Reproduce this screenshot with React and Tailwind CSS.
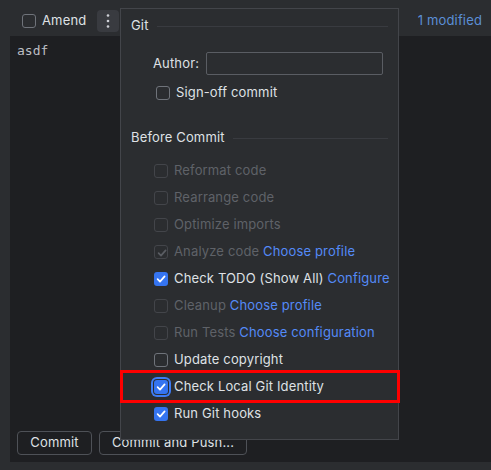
const Check = ({ color = "#ffffff" }) => (
    <svg width="14" height="14" viewBox="0 0 14 14" className="absolute inset-0">
        <path d="M3.6 7.2 L6 9.6 L10.6 4.4" fill="none" stroke={color} strokeWidth="1.7" strokeLinecap="round" strokeLinejoin="round" />
    </svg>
)

const Box = ({ checked, disabled, focused }) => {
    if (checked && !disabled) {
        return (
            <span
                className={
                    "relative w-[14px] h-[14px] rounded-[3px] bg-[#3574f0] shrink-0 " +
                    (focused ? "ring-2 ring-[#3d7cf5] ring-offset-1 ring-offset-[#2b2d30]" : "")
                }
            >
                <Check />
            </span>
        )
    }
    return (
        <span
            className={
                "relative w-[14px] h-[14px] rounded-[3px] border shrink-0 " +
                (disabled ? "border-[#43454a]" : "border-[#6f737a]")
            }
        >
            {checked && <Check color="#5a5d63" />}
        </span>
    )
}

const Row = ({ label, link, checked, disabled, focused }) => (
    <div className="h-[27px] flex items-center gap-[6px] pl-[33px]">
        <Box checked={checked} disabled={disabled} focused={focused} />
        <span className={disabled ? "text-[#5f6268]" : "text-[#dfe1e5]"}>
            {label}
            {link && <span className="text-[#548af7]"> {link}</span>}
        </span>
    </div>
)

const Section = ({ title }) => (
    <div className="h-[30px] pt-[4px] flex items-center gap-[8px] pl-[10px] pr-[10px]">
        <span className="text-[#dfe1e5]">{title}</span>
        <div className="flex-1 h-px bg-[#393b40]" />
    </div>
)

const App = () => {
    const rows = [
        { label: "Reformat code", disabled: true },
        { label: "Rearrange code", disabled: true },
        { label: "Optimize imports", disabled: true },
        { label: "Analyze code", link: "Choose profile", disabled: true, checked: true },
        { label: "Check TODO (Show All)", link: "Configure", checked: true },
        { label: "Cleanup", link: "Choose profile", disabled: true },
        { label: "Run Tests", link: "Choose configuration", disabled: true },
        { label: "Update copyright" },
        { label: "Check Local Git Identity", checked: true, focused: true },
        { label: "Run Git hooks", checked: true },
    ]

    return (
        <div
            className="relative w-[491px] h-[470px] flex flex-col bg-[#2b2d30] text-[13px] tracking-[0.15px] overflow-hidden"
            style={{ fontFamily: "Inter, 'Noto Sans', sans-serif" }}
        >
            <div className="flex flex-1">
                {/* left tool strip */}
                <div className="w-[10px] bg-[#2b2d30]" />

                <div className="flex-1 flex flex-col">
                    {/* toolbar */}
                    <div className="h-[36px] pt-[6px] bg-[#2b2d30] flex items-center pl-[12px] pr-[9px]">
                        <Box />
                        <span className="ml-[6px] text-[#dfe1e5]">Amend</span>
                        <div className="ml-[11px] w-[22px] h-[22px] rounded-[4px] bg-[#393b40] flex items-center justify-center">
                            <svg width="4" height="16" viewBox="0 0 4 16">
                                <circle cx="2" cy="2.5" r="1.3" fill="#ced0d6" />
                                <circle cx="2" cy="8" r="1.3" fill="#ced0d6" />
                                <circle cx="2" cy="13.5" r="1.3" fill="#ced0d6" />
                            </svg>
                        </div>
                        <span className="ml-auto text-[#5b8fd6]">1 modified</span>
                    </div>

                    {/* commit message editor */}
                    <div className="flex-1 bg-[#1e1f22] flex flex-col pl-[7px]">
                        <div
                            className="mt-[5px] text-[#bcbec4] text-[13px] tracking-normal"
                            style={{ fontFamily: "'DejaVu Sans Mono', monospace" }}
                        >
                            asdf
                        </div>
                        <div className="mt-auto mb-[7px] flex gap-[7px]">
                            <button className="w-[75px] h-[24px] rounded-[4px] border border-[#4e5157] text-[#dfe1e5]">
                                Commit
                            </button>
                            <button className="w-[148px] h-[24px] rounded-[4px] border border-[#4e5157] text-[#dfe1e5]">
                                Commit and Push...
                            </button>
                        </div>
                    </div>
                </div>
            </div>
            <div className="h-[8px] bg-[#2b2d30]" />

            {/* options popup */}
            <div className="absolute left-[120px] top-[8px] w-[279px] h-[432px] bg-[#2b2d30] border border-[#43454a] flex flex-col">
                <Section title="Git" />
                <div className="mt-[13px] h-[23px] flex items-center pl-[32px]">
                    <span className="text-[#dfe1e5]">Author:</span>
                    <div className="ml-[7px] w-[177px] h-[23px] border border-[#5a5d63] rounded-[2px]" />
                </div>
                <div className="mt-[5px] h-[26px] flex items-center gap-[6px] pl-[35px]">
                    <Box />
                    <span className="text-[#dfe1e5]">Sign-off commit</span>
                </div>
                <div className="mt-[15px]">
                    <Section title="Before Commit" />
                </div>
                <div className="mt-[6px] flex flex-col">
                    {rows.map((r) => (
                        <Row key={r.label} {...r} />
                    ))}
                </div>
            </div>

            {/* highlight annotation */}
            <div className="absolute left-[120px] top-[370px] w-[280px] h-[33px] border-[3px] border-[#ff0000]" />
        </div>
    )
}

export default App
